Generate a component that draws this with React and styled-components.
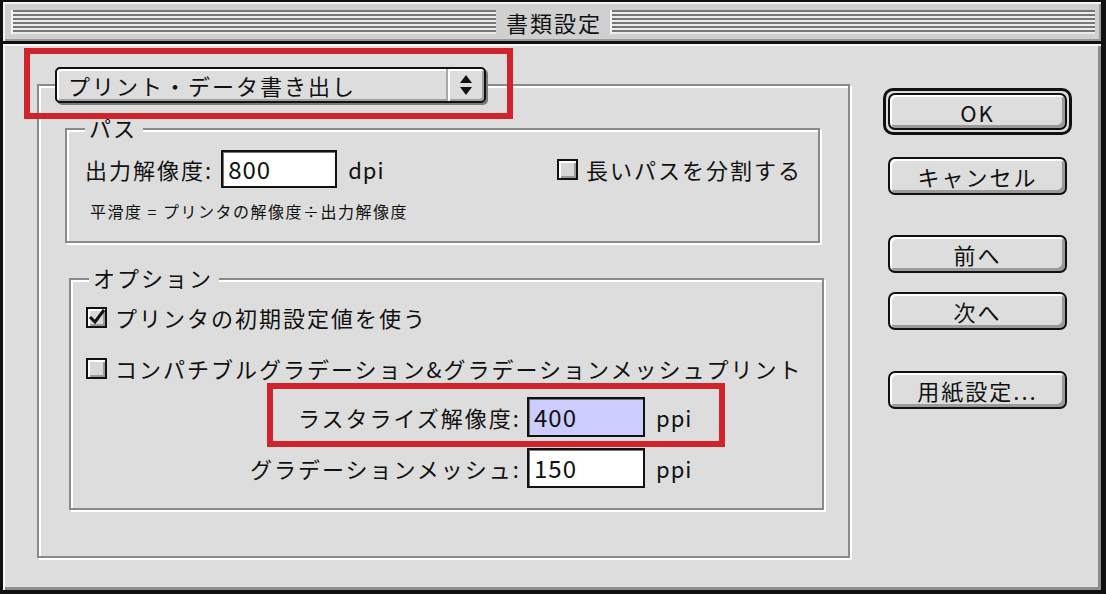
import styled, { createGlobalStyle } from "styled-components";

const GlobalStyle = createGlobalStyle`
  html, body {
    margin: 0;
    padding: 0;
    background: #dddddd;
  }
  body {
    font-family: "Noto Sans CJK JP", "Noto Sans", sans-serif;
    color: #111;
  }
  * { box-sizing: border-box; }
`;

const Window = styled.div`
  width: 1106px;
  height: 594px;
  display: flex;
  flex-direction: column;
  border-style: solid;
  border-color: #111;
  border-width: 2px 5px 4px 3px;
  background: #dddddd;
  overflow: hidden;
`;

const TitleBar = styled.div`
  height: 42px;
  flex: none;
  display: flex;
  align-items: center;
  gap: 8px;
  padding: 0 6px 0 8px;
  background: #d0d0d0;
  border-bottom: 3px solid #111;
  box-shadow: inset 2px 2px 0 #f4f4f4, inset -2px -2px 0 #9a9a9a;
`;

const Stripes = styled.div`
  flex: 1;
  height: 24px;
  background: repeating-linear-gradient(
    to bottom,
    #767676 0px,
    #767676 2px,
    #ececec 2px,
    #ececec 4px
  );
  box-shadow: inset 2px 0 0 #f4f4f4;
`;

const Title = styled.div`
  font-size: 22px;
  letter-spacing: 2px;
  line-height: 26px;
  padding-left: 2px;
`;

const Body = styled.div`
  flex: 1;
  display: flex;
  padding-left: 34px;
  box-shadow: inset 2px 2px 0 #f6f6f6, inset -3px -3px 0 #8e8e8e;
`;

const LeftColumn = styled.div`
  width: 813px;
  flex: none;
`;

const Etched = styled.div`
  border: 2px solid #8a8a8a;
  box-shadow: inset 2px 2px 0 #ffffff, 2px 2px 0 #ffffff;
`;

const OuterGroup = styled(Etched)`
  margin-top: 40px;
  height: 474px;
  padding: 0 26px;
`;

const Group = styled(Etched)`
  margin: ${(p) => p.$top}px ${(p) => p.$right}px 0 ${(p) => p.$left}px;
  padding: 0 16px ${(p) => p.$bottom}px ${(p) => p.$pad}px;
`;

const Legend = styled.div`
  display: block;
  width: max-content;
  margin: -16px 0 0 ${(p) => p.$offset}px;
  padding: 0 6px 0 4px;
  height: 26px;
  line-height: 26px;
  font-size: 22px;
  letter-spacing: 2px;
  background: #dddddd;
`;

const Highlight = styled.div`
  position: absolute;
  top: ${(p) => p.$top}px;
  right: ${(p) => p.$right}px;
  bottom: ${(p) => p.$bottom}px;
  left: ${(p) => p.$left}px;
  border: ${(p) => p.$w}px solid #d1232b;
  pointer-events: none;
`;

const PopupWrap = styled.div`
  position: relative;
  width: 431px;
  margin: -19px 0 0 -10px;
`;

const Popup = styled.div`
  height: 36px;
  display: flex;
  border: 2px solid #111;
  border-radius: 5px;
  background: #dddddd;
  box-shadow: inset 2px 2px 0 #ffffff, inset -2px -2px 0 #a0a0a0,
    2px 2px 0 #7a7a7a;
`;

const PopupText = styled.div`
  flex: 1;
  padding-left: 11px;
  font-size: 22px;
  letter-spacing: 2px;
  line-height: 32px;
`;

const PopupArrows = styled.div`
  width: 38px;
  display: flex;
  align-items: center;
  justify-content: center;
  border-left: 2px solid #a8a8a8;
  box-shadow: inset 2px 0 0 #ffffff;
`;

const Row = styled.div`
  display: flex;
  align-items: center;
  height: ${(p) => p.$h}px;
  margin-top: ${(p) => p.$top}px;
`;

const Label = styled.span`
  font-size: 22px;
  letter-spacing: 2px;
  white-space: nowrap;
`;

const FieldLabel = styled(Label)`
  width: 282px;
  text-align: right;
`;

const Input = styled.div`
  width: ${(p) => p.$w}px;
  height: ${(p) => p.$h}px;
  margin-left: ${(p) => p.$gap}px;
  border: 2px solid #111;
  background: ${(p) => (p.$selected ? "#ccccff" : "#ffffff")};
  box-shadow: inset 1px 1px 0 #777;
  padding-left: 5px;
  font-size: 24px;
  letter-spacing: 1px;
  line-height: ${(p) => p.$h - 4}px;
`;

const Unit = styled(Label)`
  width: 40px;
  margin-left: 11px;
  letter-spacing: 1px;
`;

const Check = styled.label`
  display: flex;
  align-items: center;
  gap: 8px;
  margin-left: ${(p) => (p.$auto ? "auto" : "0")};
`;

const Box = styled.span`
  width: 21px;
  height: 21px;
  flex: none;
  border: 2px solid #111;
  background: #d8d8d8;
  box-shadow: inset 2px 2px 0 #ffffff, inset -2px -2px 0 #9a9a9a;
  display: flex;
  align-items: center;
  justify-content: center;
`;

const Note = styled.div`
  margin: 12px 0 0 5px;
  height: 22px;
  line-height: 22px;
  font-size: 16px;
  letter-spacing: 1.5px;
`;

const FieldRow = styled.div`
  position: relative;
  display: flex;
  align-items: center;
  width: 457px;
  height: 40px;
  margin: ${(p) => p.$top}px 0 0 153px;
`;

const ButtonColumn = styled.div`
  width: 189px;
  margin: 44px 0 0 33px;
  display: flex;
  flex-direction: column;
`;

const DefaultRing = styled.div`
  border: 3px solid #111;
  border-radius: 10px;
  padding: 2px;
`;

const Button = styled.button`
  display: block;
  width: 179px;
  height: ${(p) => p.$h || 38}px;
  margin: ${(p) => p.$top || 0}px 5px 0;
  padding: 0;
  border: 2px solid #111;
  border-radius: 7px;
  background: #dddddd;
  box-shadow: inset 2px 2px 0 #ffffff, inset -3px -3px 0 #9a9a9a;
  font-family: "Noto Sans CJK JP", "Noto Sans", sans-serif;
  font-size: 22px;
  letter-spacing: 2px;
  color: #111;
  line-height: 30px;
`;

const RingButton = styled(Button)`
  margin: 0;
`;

const Arrows = () => (
  <svg width="14" height="22" viewBox="0 0 14 22">
    <polygon points="7,1 13,9 1,9" fill="#111" />
    <polygon points="1,13 13,13 7,21" fill="#111" />
  </svg>
);

const Tick = () => (
  <svg width="17" height="17" viewBox="0 0 17 17">
    <polyline
      points="2,8 7,13 16,1"
      fill="none"
      stroke="#111"
      strokeWidth="3"
    />
  </svg>
);

export default function App() {
  return (
    <>
      <GlobalStyle />
      <Window>
        <TitleBar>
          <Stripes />
          <Title>書類設定</Title>
          <Stripes />
        </TitleBar>
        <Body>
          <LeftColumn>
            <OuterGroup>
              <PopupWrap>
                <Popup>
                  <PopupText>プリント・データ書き出し</PopupText>
                  <PopupArrows>
                    <Arrows />
                  </PopupArrows>
                </Popup>
                <Highlight $w={6} $top={-19} $right={-27} $bottom={-16} $left={-31} />
              </PopupWrap>

              <Group $top={25} $right={2} $left={0} $pad={18} $bottom={19}>
                <Legend $offset={0}>パス</Legend>
                <Row $h={38} $top={10}>
                  <Label>出力解像度:</Label>
                  <Input $w={116} $h={38} $gap={8}>800</Input>
                  <Unit>dpi</Unit>
                  <Check $auto>
                    <Box />
                    <Label>長いパスを分割する</Label>
                  </Check>
                </Row>
                <Note>平滑度 = プリンタの解像度÷出力解像度</Note>
              </Group>

              <Group $top={35} $right={-2} $left={4} $pad={15} $bottom={20}>
                <Legend $offset={3}>オプション</Legend>
                <Row $h={26} $top={14}>
                  <Check>
                    <Box>
                      <Tick />
                    </Box>
                    <Label>プリンタの初期設定値を使う</Label>
                  </Check>
                </Row>
                <Row $h={26} $top={25}>
                  <Check>
                    <Box />
                    <Label>コンパチブルグラデーション&amp;グラデーションメッシュプリント</Label>
                  </Check>
                </Row>
                <FieldRow $top={16}>
                  <FieldLabel>ラスタライズ解像度:</FieldLabel>
                  <Input $w={118} $h={40} $gap={6} $selected>400</Input>
                  <Unit>ppi</Unit>
                  <Highlight $w={6} $top={-14} $right={-29} $bottom={-10} $left={28} />
                </FieldRow>
                <FieldRow $top={11}>
                  <FieldLabel>グラデーションメッシュ:</FieldLabel>
                  <Input $w={118} $h={40} $gap={6}>150</Input>
                  <Unit>ppi</Unit>
                </FieldRow>
              </Group>
            </OuterGroup>
          </LeftColumn>

          <ButtonColumn>
            <DefaultRing>
              <RingButton $h={37}>OK</RingButton>
            </DefaultRing>
            <Button $top={22}>キャンセル</Button>
            <Button $top={40}>前へ</Button>
            <Button $top={19}>次へ</Button>
            <Button $top={41}>用紙設定...</Button>
          </ButtonColumn>
        </Body>
      </Window>
    </>
  );
}
